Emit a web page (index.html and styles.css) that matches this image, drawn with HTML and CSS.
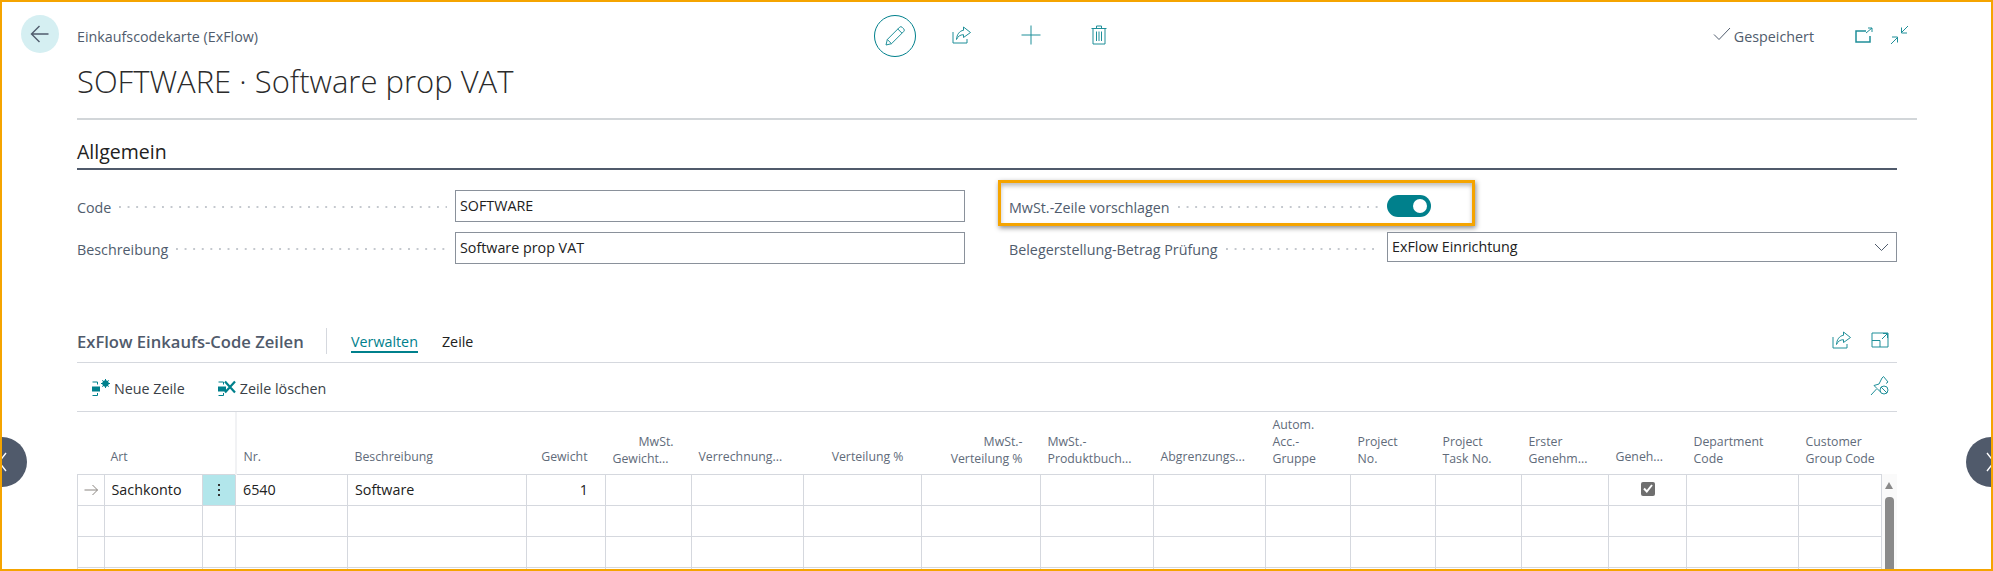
FILE: index.html
```html
<!DOCTYPE html>
<html lang="de">
<head>
  <meta charset="UTF-8">
  <title>Einkaufscodekarte (ExFlow)</title>
  <link rel="stylesheet" href="styles.css">
</head>
<body>
  <div class="frame">
    <header class="head">
      <button class="back">
        <svg width="20" height="20" viewBox="0 0 20 20"><path d="M18.5 10H1.5M9.5 2 1.5 10l8 8" /></svg>
      </button>
      <div class="crumb">Einkaufscodekarte (ExFlow)</div>
      <div class="tools">
        <span class="edit">
          <svg width="22" height="22" viewBox="0 0 22 22"><path d="M2 20l1.3-5.5L15.5 2.3a1.9 1.9 0 0 1 2.7 0l1.500 1.500a1.900 1.900 0 0 1 0 2.700L7.500 18.700z M3.300 14.500l4.200 4.200M13.800 4l4.200 4.200" /></svg>
        </span>
        <svg class="tool share" width="20" height="18" viewBox="0 0 20 18"><path d="M1 6v11h14v-4" /><path d="M11.500 1 18.500 6.500 11.500 11.500V8.700C8 8.700 5.800 10.500 4.500 13.500 4.800 8.500 7.500 4.800 11.500 4.300z" /></svg>
        <svg class="tool plus" width="20" height="20" viewBox="0 0 20 20"><path d="M0.500 10h19M10 0.500v19" /></svg>
        <svg class="tool trash" width="16" height="20" viewBox="0 0 16 20"><path d="M0.500 3.500h15M5.500 3.500V1h5v2.500M2 3.500V19h12V3.500M5.500 6.500v9.500M8 6.500v9.500M10.500 6.500v9.500" /></svg>
      </div>
      <div class="status">
        <svg class="check" width="18" height="14" viewBox="0 0 18 14"><path d="M1 7.500 6 12.500 17 1" /></svg>
        <span>Gespeichert</span>
        <svg class="tool popout" width="18" height="16" viewBox="0 0 18 16"><path d="M11 4H1v11h14V9" class="thick" /><path d="M11 6l6-5M13 1h4v4" /></svg>
        <svg class="tool collapse" width="19" height="20" viewBox="0 0 19 20"><path d="M1 19l6-6M2 12h5.500v5.500M18 1l-6 6M17 8h-5.500V2.500" /></svg>
      </div>
    </header>

    <div class="title-block">
      <h1>SOFTWARE · Software prop VAT</h1>
    </div>

    <section class="general">
      <h2>Allgemein</h2>
      <div class="fields">
        <div class="field">
          <label>Code</label><span class="leader"></span>
          <div class="input">SOFTWARE</div>
        </div>
        <div class="field">
          <label>MwSt.-Zeile vorschlagen</label><span class="leader"></span>
          <div class="toggle-wrap"><span class="toggle"></span></div>
          <span class="highlight"></span>
        </div>
        <div class="field">
          <label>Beschreibung</label><span class="leader"></span>
          <div class="input">Software prop VAT</div>
        </div>
        <div class="field">
          <label>Belegerstellung-Betrag Prüfung</label><span class="leader"></span>
          <div class="input select">
            ExFlow Einrichtung
            <svg width="15" height="9" viewBox="0 0 15 9"><path d="M1 1l6.500 6.500L14 1" /></svg>
          </div>
        </div>
      </div>
    </section>

    <section class="lines">
      <div class="lines-head">
        <h3>ExFlow Einkaufs-Code Zeilen</h3>
        <nav class="tabs">
          <a class="active">Verwalten</a>
          <a>Zeile</a>
        </nav>
        <div class="lines-icons">
          <svg class="tool" width="20" height="18" viewBox="0 0 20 18"><path d="M1 6v11h14v-4" /><path d="M11.500 1 18.500 6.500 11.500 11.500V8.700C8 8.700 5.800 10.500 4.500 13.500 4.800 8.500 7.500 4.800 11.500 4.300z" /></svg>
          <svg class="tool" width="18" height="16" viewBox="0 0 18 16"><path d="M1 1h16v14H1zM1 8.500h8V15M11 7l5-5M12 1.500h4.500V6" /></svg>
        </div>
      </div>
      <div class="actions">
        <a class="action">
          <svg width="19" height="18" viewBox="0 0 19 18"><path class="solid" d="M0 7.500h8v5H0z" /><path d="M0.500 3h5v2.500M0.500 16.500h5V14" /><circle cx="13.500" cy="4.500" r="2.500" class="thick" /><path d="M13.500 0v9M9 4.500h9M10.300 1.300l6.400 6.400M16.700 1.300l-6.400 6.400" /></svg>
          Neue Zeile
        </a>
        <a class="action">
          <svg width="19" height="18" viewBox="0 0 19 18"><path class="solid" d="M0 7.500h8v5H0z" /><path d="M0.500 3h5v2.500M0.500 16.500h5V14" /><path class="heavy" d="M7 2.500l10 11M17 2.500l-10 11" /></svg>
          Zeile löschen
        </a>
        <svg class="tool pin" width="19" height="20" viewBox="0 0 19 20"><path d="M1 19l5.500-6M4 9.500 9 8l3-6 1.500-1.500L18 6l-2 1.500M4 9.500 7 12.500 10.500 16" /><circle cx="14" cy="14" r="4" /><path d="M11 11l6 6" /></svg>
      </div>
      <div class="grid-wrap">
        <table class="grid">
          <colgroup>
            <col class="c-w26"><col class="c-w98"><col class="c-w33"><col class="c-w112"><col class="c-w179"><col class="c-w79"><col class="c-w86"><col class="c-w112"><col class="c-w118"><col class="c-w119"><col class="c-w113"><col class="c-w112"><col class="c-w85"><col class="c-w85"><col class="c-w86"><col class="c-w87"><col class="c-w78"><col class="c-w112"><col class="c-w83">
          </colgroup>
          <thead>
            <tr>
              <th colspan="3" class="art one">Art</th>
              <th class="one">Nr.</th>
              <th class="one">Beschreibung</th>
              <th class="num one">Gewicht</th>
              <th class="num">MwSt.<br><span class="trunc">Gewicht...</span></th>
              <th class="num one wide">Verrechnung...</th>
              <th class="num one">Verteilung %</th>
              <th class="num">MwSt.-<br>Verteilung %</th>
              <th>MwSt.-<br>Produktbuch...</th>
              <th class="one">Abgrenzungs...</th>
              <th>Autom.<br>Acc.-<br>Gruppe</th>
              <th>Project<br>No.</th>
              <th>Project<br>Task No.</th>
              <th>Erster<br>Genehm...</th>
              <th class="one">Geneh...</th>
              <th>Department<br>Code</th>
              <th>Customer<br>Group Code</th>
            </tr>
          </thead>
          <tbody>
            <tr>
              <td class="mark"><svg width="15" height="12" viewBox="0 0 15 12"><path d="M0.500 6h13M8.500 1l5 5-5 5" /></svg></td>
              <td>Sachkonto</td>
              <td class="dots"><i></i><i></i><i></i></td>
              <td>6540</td>
              <td>Software</td>
              <td class="num">1</td>
              <td></td><td></td><td></td><td></td><td></td><td></td><td></td><td></td><td></td><td></td>
              <td class="center"><span class="box"><svg width="10" height="9" viewBox="0 0 10 9"><path d="M1 4.500 3.800 7.500 9 1" /></svg></span></td>
              <td></td><td></td>
            </tr>
            <tr><td></td><td></td><td></td><td></td><td></td><td></td><td></td><td></td><td></td><td></td><td></td><td></td><td></td><td></td><td></td><td></td><td></td><td></td><td></td></tr>
            <tr><td></td><td></td><td></td><td></td><td></td><td></td><td></td><td></td><td></td><td></td><td></td><td></td><td></td><td></td><td></td><td></td><td></td><td></td><td></td></tr>
            <tr><td></td><td></td><td></td><td></td><td></td><td></td><td></td><td></td><td></td><td></td><td></td><td></td><td></td><td></td><td></td><td></td><td></td><td></td><td></td></tr>
          </tbody>
        </table>
        <div class="scrollbar">
          <span class="arrow"></span>
          <span class="thumb"></span>
        </div>
      </div>
    </section>

    <button class="side side-left"><svg width="10" height="20" viewBox="0 0 10 20"><path d="M8 1 1 10l7 9" /></svg></button>
    <button class="side side-right"><svg width="10" height="20" viewBox="0 0 10 20"><path d="M2 1l7 9-7 9" /></svg></button>
  </div>
</body>
</html>
```

FILE: styles.css
```css
* {
  box-sizing: border-box;
}
body {
  margin: 0;
  background: #fff;
  font-family: "Open Sans", "Noto Sans", sans-serif;
  color: #212121;
}
svg {
  fill: none;
  stroke: currentColor;
  stroke-width: 1;
  display: block;
}
.frame {
  position: relative;
  height: 571px;
  border: 2px solid #f5a400;
  overflow: hidden;
}

/* top bar */
.head {
  display: flex;
  align-items: flex-start;
  height: 42px;
  margin-top: 13px;
  padding-left: 19px;
}
.back {
  width: 38px;
  height: 38px;
  border: none;
  border-radius: 50%;
  background: #d5eff2;
  color: #505c6d;
  display: flex;
  align-items: center;
  justify-content: center;
  padding: 0;
}
.back svg {
  stroke-width: 1.4;
}
.crumb {
  width: 797px;
  margin-left: 18px;
  line-height: 18px;
  padding-top: 13px;
  font-size: 14.3px;
  color: #505c6d;
}
.tools {
  display: flex;
  align-items: center;
  height: 42px;
  color: #1f8f99;
}
.edit {
  width: 42px;
  height: 42px;
  border: 1px solid #00808c;
  border-radius: 50%;
  display: flex;
  align-items: center;
  justify-content: center;
}
.tool {
  color: #1f8f99;
}
.share { margin-left: 36px; margin-top: -3px; }
.plus { margin-left: 49px; margin-top: -2px; }
.trash { margin-left: 50px; margin-top: -2px; }
.status {
  display: flex;
  align-items: center;
  height: 42px;
  margin-left: auto;
  padding-right: 82px;
  font-size: 14.3px;
  color: #505c6d;
}
.status span {
  margin-left: 3px;
  margin-top: 1px;
}
.check { margin-top: -4px; }
.popout { margin-left: 41px; margin-top: -3px; }
.collapse { margin-left: 17px; margin-top: -2px; }
.thick { stroke-width: 1.5; }
.heavy { stroke-width: 2.2; }

.title-block {
  margin: 2px 74px 0 75px;
  padding-bottom: 15px;
  border-bottom: 2px solid #d2d6d9;
}
h1 {
  margin: 0;
  font-size: 31px;
  line-height: 44px;
  font-weight: 300;
  color: #2b2b2b;
}

/* Allgemein */
.general {
  margin: 20px 94px 0 75px;
}
h2 {
  margin: 0;
  height: 28px;
  font-size: 19.5px;
  line-height: 24px;
  font-weight: 500;
  white-space: nowrap;
}
.fields {
  display: grid;
  grid-template-columns: 888px 888px;
  column-gap: 44px;
  row-gap: 10px;
  padding-top: 20px;
  border-top: 2px solid #505a6b;
}
.field {
  position: relative;
  display: flex;
  align-items: center;
  height: 32px;
  font-size: 14.3px;
  color: #505c6d;
}
.field label {
  padding-top: 2px;
}
.leader {
  flex: 1;
  height: 2px;
  margin: 2px 8px 0;
  background: radial-gradient(circle at 1px 1px, #c4c8ce 1px, transparent 1px) 0 0 / 8.6px 2px repeat-x;
}
.input {
  width: 510px;
  height: 32px;
  line-height: 30px;
  padding: 0 4px;
  border: 1px solid #8a919b;
  color: #212121;
}
.select {
  display: flex;
  align-items: center;
  justify-content: space-between;
  height: 30px;
  margin-bottom: 2px;
  padding-right: 7px;
  line-height: 28px;
}
.select svg {
  color: #505c6d;
}
.toggle-wrap {
  width: 510px;
}
.toggle {
  display: block;
  position: relative;
  width: 44px;
  height: 22px;
  border-radius: 11px;
  background: #00808c;
}
.toggle::after {
  content: "";
  position: absolute;
  right: 4px;
  top: 4px;
  width: 14px;
  height: 14px;
  border-radius: 50%;
  background: #fff;
}
.highlight {
  position: absolute;
  left: -11px;
  top: -10px;
  width: 477px;
  height: 46px;
  border: 3px solid #f5a400;
  box-shadow: 1px 2px 5px rgba(0, 0, 0, 0.45), inset 0 3px 4px rgba(0, 0, 0, 0.25);
  pointer-events: none;
}

/* lines part */
.lines {
  margin: 64px 94px 0 75px;
}
.lines-head {
  display: flex;
  align-items: flex-start;
  height: 35px;
  border-bottom: 1px solid #d5d8de;
}
h3 {
  margin: 0;
  width: 250px;
  height: 26px;
  line-height: 28px;
  font-size: 16.6px;
  font-weight: 600;
  color: #505a6b;
  border-right: 1px solid #d5d8de;
}
.tabs {
  display: flex;
  gap: 24px;
  margin-left: 24px;
  font-size: 14.3px;
}
.tabs a {
  height: 25px;
  line-height: 27px;
}
.tabs .active {
  color: #00808c;
  border-bottom: 2px solid #00808c;
}
.lines-icons {
  display: flex;
  align-items: center;
  gap: 19px;
  height: 24px;
  margin-left: auto;
  padding-right: 8px;
}
.actions {
  display: flex;
  align-items: center;
  height: 49px;
  padding: 2px 0 0 15px;
  border-bottom: 1px solid #d5d8de;
  font-size: 14.3px;
  color: #3a3f47;
}
.action {
  display: flex;
  align-items: center;
  gap: 3px;
  margin-right: 33px;
}
.action svg {
  color: #00808c;
}
.solid {
  fill: #00808c;
  stroke: none;
}
.pin {
  margin-left: auto;
  margin-right: 8px;
  margin-top: -4px;
}
.grid-wrap {
  display: flex;
  align-items: flex-start;
}
.grid {
  width: 1805px;
  table-layout: fixed;
  border-collapse: collapse;
  font-size: 14.3px;
}
.c-w26 { width: 26.5px; }
.c-w98 { width: 98.5px; }
.c-w33 { width: 33px; }
.c-w112 { width: 112px; }
.c-w179 { width: 179px; }
.c-w79 { width: 79px; }
.c-w86 { width: 86px; }
.c-w118 { width: 118px; }
.c-w119 { width: 119px; }
.c-w113 { width: 113px; }
.c-w85 { width: 85px; }
.c-w87 { width: 87px; }
.c-w78 { width: 78px; }
.c-w83 { width: 83px; }
.grid th {
  height: 62px;
  padding: 0 7px 7px;
  vertical-align: bottom;
  text-align: left;
  font-size: 12.3px;
  line-height: 17px;
  font-weight: 400;
  color: #616b7a;
  white-space: nowrap;
  overflow: hidden;
}
.grid th.one {
  padding-bottom: 9px;
}
.grid th.num {
  text-align: right;
  padding-right: 18px;
}
.grid th.wide {
  padding-right: 22px;
}
.grid td.num {
  text-align: right;
  padding-right: 17px;
}
.grid th.art {
  padding-left: 33px;
  border-right: 2px solid #f1f2f4;
}
.trunc {
  margin-right: 6px;
}
.grid td {
  height: 31px;
  padding: 0 7px;
  border: 1px solid #d5d8de;
  color: #212121;
}
.mark svg {
  color: #8a8580;
}
.grid .mark {
  padding: 0 0 0 6px;
}
.grid .dots {
  background: #b2e6eb;
  text-align: center;
  padding: 0;
  line-height: 0;
}
.dots i {
  display: block;
  width: 2px;
  height: 2px;
  margin: 3px auto;
  background: #333;
}
.grid .center {
  padding: 0;
}
.box {
  display: flex;
  align-items: center;
  justify-content: center;
  width: 14px;
  height: 14px;
  margin: -2px auto 0;
  border-radius: 2px;
  background: #6f6f6f;
  color: #fff;
}
.box svg {
  stroke-width: 2;
}
.scrollbar {
  position: relative;
  width: 15px;
  height: 160px;
  margin-top: 62px;
  background: #fafafa;
}
.arrow {
  position: absolute;
  left: 3px;
  top: 8px;
  border-left: 4.500px solid transparent;
  border-right: 4.500px solid transparent;
  border-bottom: 7px solid #8a8a8a;
}
.thumb {
  position: absolute;
  left: 3px;
  top: 23px;
  width: 9px;
  height: 130px;
  border-radius: 4px;
  background: #8a8a8a;
}

/* paging buttons that sit over the page edge */
.side {
  position: absolute;
  top: 435px;
  width: 50px;
  height: 50px;
  padding: 0;
  border: none;
  border-radius: 50%;
  background: #505a6b;
  color: #fff;
}
.side svg {
  position: absolute;
  top: 15px;
  stroke-width: 1.4;
}
.side-left { left: -25px; }
.side-left svg { right: 19px; }
.side-right { right: -25px; }
.side-right svg { left: 19px; }
```
